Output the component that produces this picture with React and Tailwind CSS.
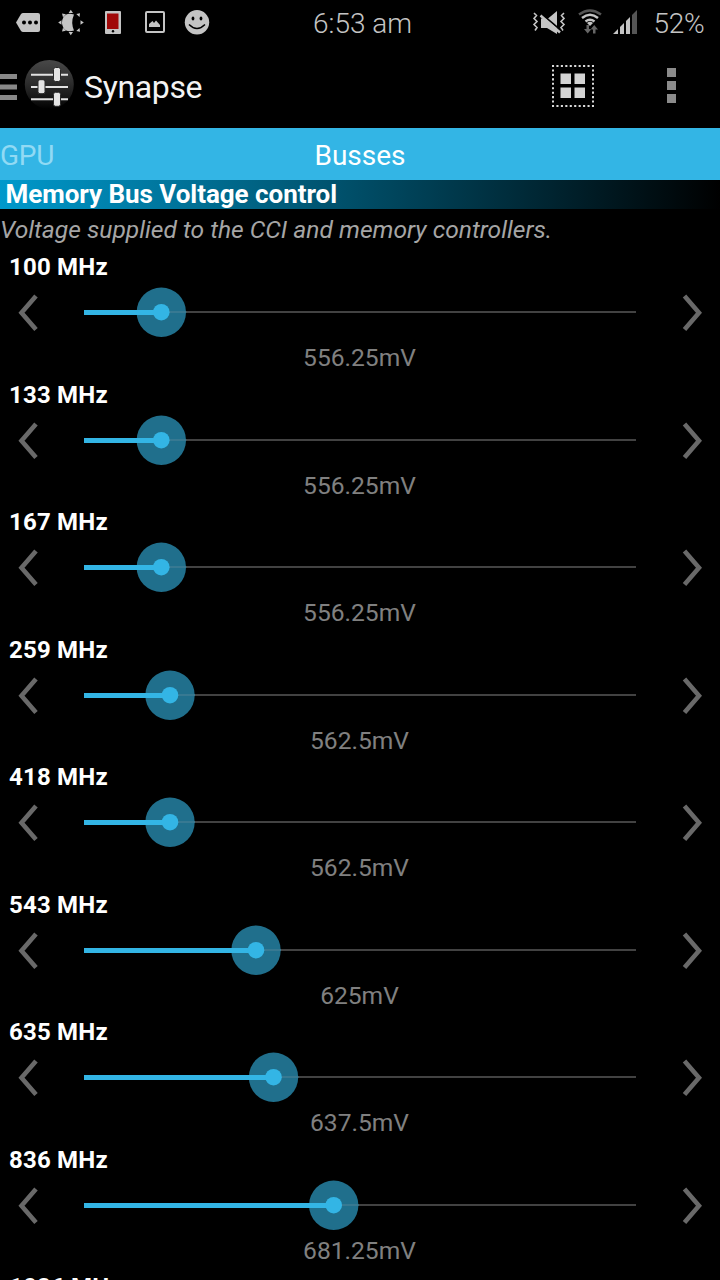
import React from "react";

const buses = [
  { label: "100 MHz", value: "556.25mV", x: 77.3 },
  { label: "133 MHz", value: "556.25mV", x: 77.3 },
  { label: "167 MHz", value: "556.25mV", x: 77.3 },
  { label: "259 MHz", value: "562.5mV", x: 86 },
  { label: "418 MHz", value: "562.5mV", x: 86 },
  { label: "543 MHz", value: "625mV", x: 172 },
  { label: "635 MHz", value: "637.5mV", x: 189.5 },
  { label: "836 MHz", value: "681.25mV", x: 249.7 },
  { label: "1026 MHz", value: "", x: 300 },
];

function StatusBar() {
  return (
    <header className="flex h-[46px] shrink-0 items-center text-[28px] font-light text-[#c4c4c4]">
      <svg className="w-[220px] shrink-0" height="46" viewBox="0 0 220 46" fill="#c4c4c4">
        <path d="M16 22.500L21 14Q22 13 23 13H38Q40 13 40 15V30Q40 32 38 32H23Q22 32 21 31Z" />
        <g fill="#000"><circle cx="24" cy="22.500" r="2" /><circle cx="30" cy="22.500" r="2" /><circle cx="36" cy="22.500" r="2" /></g>
        <path d="M74 14.500Q67 12 63.500 17Q60.500 22.500 63.500 28Q67 33 74 30.500Q70.500 22.500 74 14.500Z" />
        <path d="M58.200 22.500L61.500 20.200V24.800ZM70.800 9.800L73 13H68.600ZM70.800 35.200L68.600 32H73ZM62 13.500L66 14.200L63 17.200ZM62 31.500L63 27.800L66 30.800ZM80 13.200L79.500 17L76.300 14ZM80 31.800L76.300 31L79.500 28ZM83.800 22.500L80.500 20.200V24.800Z" />
        <path d="M106 11H120Q121 11 121 12V33Q121 34 120 34H106Q105 34 105 33V12Q105 11 106 11Z" />
        <path fill="#a00808" d="M107 13.500H118.500V29H107Z" />
        <circle cx="113" cy="31.200" r="1.200" fill="#000" />
        <rect x="146" y="12" width="18" height="20" rx="1" fill="none" stroke="#c4c4c4" strokeWidth="2" />
        <path d="M149 27V24L152.500 21L154 23L156 20.500L160 25V27Z" />
        <circle cx="197" cy="22.300" r="12.200" />
        <ellipse cx="193" cy="18.500" rx="1.400" ry="2" fill="#000" /><ellipse cx="201" cy="18.500" rx="1.400" ry="2" fill="#000" />
        <path d="M189 24.500Q197 32.500 205 24.500" fill="none" stroke="#000" strokeWidth="1.500" />
      </svg>
      <span className="ml-[93px] w-[200px] whitespace-nowrap pt-[2px]">6:53 am</span>
      <svg className="ml-[17px] w-[110px] shrink-0" height="46" viewBox="530 0 110 46" fill="#c4c4c4">
        <path d="M534 13l2.500 2.500l-2.500 3l3 3l-3 3l3 3l-2 3M564 13l-2.500 2.500l2.500 3l-3 3l3 3l-3 3l2 3" fill="none" stroke="#c4c4c4" strokeWidth="1.600" />
        <path d="M541 18.500H548L557 11V34L547 28H541Z" />
        <path d="M541 13.500L561 30.500" stroke="#000" strokeWidth="1.700" />
        <path d="M540.500 15.500L560 32.500" stroke="#c4c4c4" strokeWidth="2.500" />
        <g fill="none" strokeWidth="2.500"><path d="M579 14.500Q590 6.500 601 14.500" stroke="#555" /><path d="M582 18Q590 11.500 598 18" stroke="#c4c4c4" /><path d="M585.500 21.500Q590 18 594.500 21.500" stroke="#c4c4c4" /></g>
        <path d="M587 23Q590 20.500 593 23L590 26Z" />
        <path fill="#666" d="M586.500 25H589V29H591.500L587.700 33.500L584 29H586.500ZM593 33.500H595.500V29.500H598L594.200 25L590.500 29.500H593Z" />
        <path d="M613 34L618 29V34ZM620 34V27L624 23V34ZM626 34V21L630 17V34Z" />
        <path fill="#555" d="M632 34V15L637 10V34Z" />
      </svg>
      <span className="ml-[13.5px] pt-[2px] tracking-[-0.3px]">52%</span>
    </header>
  );
}

function ActionBar() {
  return (
    <div className="flex h-[82px] shrink-0 items-center pb-[2px]">
      <svg className="w-[76px] shrink-0" height="82" viewBox="0 45 76 82">
        <defs>
          <linearGradient id="disc" x1="0" y1="0" x2="0" y2="1">
            <stop offset="0" stopColor="#484848" /><stop offset=".45" stopColor="#2e2e2e" /><stop offset=".75" stopColor="#181818" /><stop offset="1" stopColor="#000" />
          </linearGradient>
        </defs>
        <path fill="#888" d="M0 74H17V79H0ZM0 84.500H17V89.500H0ZM0 95H17V100H0Z" />
        <circle cx="49.300" cy="84.500" r="24.500" fill="url(#disc)" />
        <path d="M31 74.700H68M31 87H68M31 99.300H68" stroke="#e2e2e2" strokeWidth="2" />
        <g fill="#e4e4e4" stroke="#2a2a2a" strokeWidth="1"><rect x="53.500" y="67.500" width="7" height="14" rx="2" /><rect x="38" y="79.700" width="7" height="14" rx="2" /><rect x="53.500" y="92.300" width="7" height="14" rx="2" /></g>
      </svg>
      <h1 className="ml-2 w-[468px] pt-[2px] text-[32px] font-normal tracking-[-0.35px] text-[#f3f3f3]">Synapse</h1>
      <svg className="w-[42px] shrink-0" height="42" viewBox="0 0 42 42">
        <rect x="1" y="1" width="40" height="40" fill="none" stroke="#dadada" strokeWidth="2" strokeDasharray="2.100 2.344" strokeDashoffset="1.050" />
        <path fill="#d4d4d4" d="M8.500 8.500H19V19H8.500ZM22.500 8.500H33V19H22.500ZM8.500 22.500H19V33H8.500ZM22.500 22.500H33V33H22.500Z" />
      </svg>
      <svg className="ml-[73px] w-[9px] shrink-0" height="36" viewBox="0 0 9 36" fill="#8b8b8b"><path d="M0 0H9V9H0ZM0 13H9V22H0ZM0 26H9V35H0Z" /></svg>
    </div>
  );
}

function Chevron({ right = false }) {
  return (
    <svg width="20" height="38" viewBox="0 0 20 38" className="shrink-0" fill="none" stroke="#696969" strokeWidth="4.600">
      <path d={right ? "M2.500 3L17 19.700L2.500 36.400" : "M18 3L3.500 19.700L18 36.400"} />
    </svg>
  );
}

function BusRow({ label, value, x }) {
  return (
    <section className="h-[127.5px] shrink-0">
      <h3 className="h-8 pl-[9px] text-[24px] leading-8 font-bold tracking-[0.2px] text-white">{label}</h3>
      <div className="flex h-[58px] items-center justify-between px-[18px]">
        <Chevron />
        <svg width="600" height="58" viewBox="-24 0 600 58" className="shrink-0">
          <path d="M0 29H552" stroke="#424242" strokeWidth="2" />
          <circle cx={x} cy="29.200" r="24.700" fill="#206f8c" />
          <path d={`M${x} 29H${x + 25}`} stroke="#3f7d94" strokeWidth="1.500" />
          <path d={`M0 29.500H${x}`} stroke="#33b5e5" strokeWidth="5" />
          <circle cx={x} cy="29.200" r="8.300" fill="#33b5e5" />
        </svg>
        <Chevron right />
      </div>
      <p className="h-[33px] pr-px text-center text-[24.6px] leading-[33px] text-[#808080]">{value}</p>
    </section>
  );
}

export default function App() {
  return (
    <main className="flex h-[1280px] w-[720px] flex-col overflow-hidden bg-black font-['Roboto',sans-serif]">
      <StatusBar />
      <ActionBar />
      <nav className="grid h-[52px] shrink-0 grid-cols-3 items-center bg-[#33b5e5] pt-[3px] text-[28px]">
        <span className="tracking-[-0.3px] text-[#91daf4]">GPU</span>
        <span className="text-center text-white">Busses</span>
      </nav>
      <h2 className="h-[29px] shrink-0 bg-linear-to-r/srgb from-[#0099cc] to-black pl-[5.5px] text-[26px] leading-[29px] font-bold tracking-[-0.04px] text-white">Memory Bus Voltage control</h2>
      <p className="h-[42px] shrink-0 text-[24.6px] leading-[42px] whitespace-nowrap text-[#a5a5a5] italic">Voltage supplied to the CCI and memory controllers.</p>
      {buses.map((bus) => <BusRow key={bus.label} {...bus} />)}
    </main>
  );
}
